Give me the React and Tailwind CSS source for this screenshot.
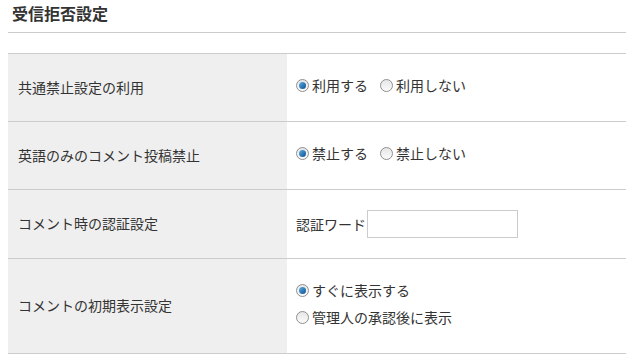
import React from "react";

function Radio({ checked }) {
  return (
    <span className="inline-flex w-[13px] h-[13px] rounded-full border border-[#8f8f8f] bg-gradient-to-b from-[#e6e6e6] to-[#fbfbfb] items-center justify-center shrink-0">
      {checked && (
        <span className="w-[7px] h-[7px] rounded-full bg-gradient-to-br from-[#5ab0e6] to-[#0f4f8f]" />
      )}
    </span>
  );
}

function Opt({ checked, label }) {
  return (
    <span className="inline-flex items-center gap-[3px]">
      <Radio checked={checked} />
      <span>{label}</span>
    </span>
  );
}

function Row({ label, children, h }) {
  return (
    <div className={`flex border-b border-[#cccccc] ${h}`}>
      <div className="w-[279px] bg-[#efefef] flex items-center pl-[10px] pb-[1px] shrink-0">
        {label}
      </div>
      <div className="flex-1 flex items-center pl-[9px]">{children}</div>
    </div>
  );
}

export default function App() {
  return (
    <div
      className="w-[640px] h-[360px] bg-white overflow-hidden text-[#333333] text-[14px]"
      style={{ fontFamily: '"Noto Sans CJK JP", "Noto Sans", sans-serif' }}
    >
      <div className="ml-[8px] w-[618px]">
        <div className="h-[33px] border-b border-[#cccccc] pl-[4px] pt-[2px] text-[16px] font-bold leading-[22px]">
          受信拒否設定
        </div>
        <div className="mt-[20px] border-t border-[#cccccc]">
          <Row label="共通禁止設定の利用" h="h-[68px]">
            <div className="flex items-center gap-[12px] pb-[4px]">
              <Opt checked label="利用する" />
              <Opt label="利用しない" />
            </div>
          </Row>
          <Row label="英語のみのコメント投稿禁止" h="h-[68px]">
            <div className="flex items-center gap-[12px] pb-[4px]">
              <Opt checked label="禁止する" />
              <Opt label="禁止しない" />
            </div>
          </Row>
          <Row label="コメント時の認証設定" h="h-[69px]">
            <div className="flex items-center">
              <span className="w-[71px]">認証ワード</span>
              <input
                type="text"
                className="w-[151px] h-[28px] border border-[#cccccc] bg-white outline-none"
              />
            </div>
          </Row>
          <Row label="コメントの初期表示設定" h="h-[95px]">
            <div className="flex flex-col gap-[6px] pb-[4px]">
              <Opt checked label="すぐに表示する" />
              <Opt label="管理人の承認後に表示" />
            </div>
          </Row>
        </div>
      </div>
    </div>
  );
}
